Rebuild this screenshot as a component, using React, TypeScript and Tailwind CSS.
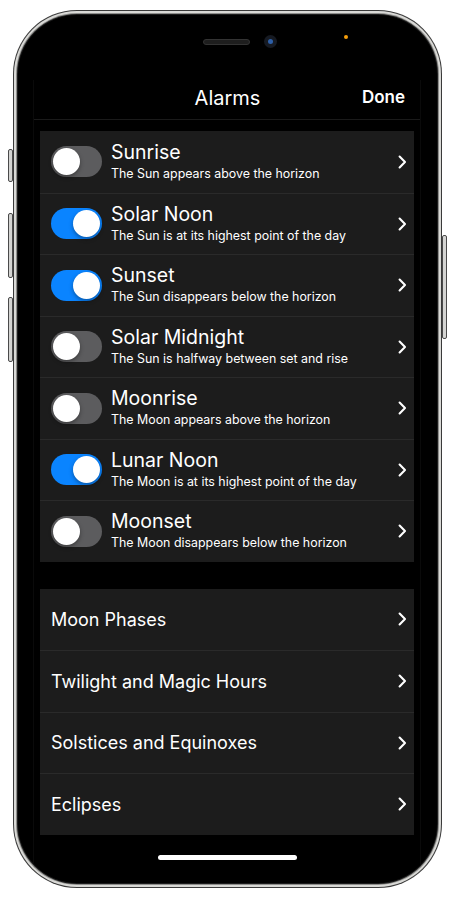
type Alarm = { title: string; sub: string; on: boolean }

const alarms: Alarm[] = [
    { title: "Sunrise", sub: "The Sun appears above the horizon", on: false },
    { title: "Solar Noon", sub: "The Sun is at its highest point of the day", on: true },
    { title: "Sunset", sub: "The Sun disappears below the horizon", on: true },
    { title: "Solar Midnight", sub: "The Sun is halfway between set and rise", on: false },
    { title: "Moonrise", sub: "The Moon appears above the horizon", on: false },
    { title: "Lunar Noon", sub: "The Moon is at its highest point of the day", on: true },
    { title: "Moonset", sub: "The Moon disappears below the horizon", on: false },
]

const events = ["Moon Phases", "Twilight and Magic Hours", "Solstices and Equinoxes", "Eclipses"]

function Toggle({ on }: { on: boolean }) {
    return (
        <div className={`w-[51px] h-[31px] rounded-full p-[2px] flex shrink-0 ${on ? "bg-[#0a84ff] justify-end" : "bg-[#5c5c5e] justify-start"}`}>
            <div className="w-[27px] h-[27px] rounded-full bg-white shadow-[0_2px_4px_rgba(0,0,0,0.35)]" />
        </div>
    )
}

function Chevron() {
    return (
        <svg className="w-[9px] h-[14px] shrink-0" viewBox="0 0 9 14" fill="none">
            <path d="M1.6 1.6 L7 7 L1.6 12.4" stroke="white" strokeWidth={2.1} strokeLinecap="round" strokeLinejoin="round" />
        </svg>
    )
}

function SideButton({ className }: { className: string }) {
    return <div className={`absolute w-[5px] rounded-[2px] bg-[#d4d4d2] border border-[#4a4a4a] ${className}`} />
}

export default function App() {
    return (
        <div className="w-[455px] h-[900px] bg-white pt-[10px] pl-[13px] relative" style={{ fontFamily: "Inter, 'Noto Sans', sans-serif" }}>
            {/* hardware buttons */}
            <SideButton className="left-[8px] top-[149px] h-[33px]" />
            <SideButton className="left-[8px] top-[213px] h-[65px]" />
            <SideButton className="left-[8px] top-[297px] h-[65px]" />
            <SideButton className="left-[442px] top-[235px] h-[104px]" />

            {/* phone frame */}
            <div className="w-[429px] h-[878px] rounded-[64px] bg-[#3a3a3a] p-[1px] relative">
                <div className="w-full h-full rounded-[63px] bg-[#d9d9d6] p-[2px]">
                    <div className="w-full h-full rounded-[61px] bg-[#8e8e8c] p-[1px]">
                        <div className="w-full h-full rounded-[60px] bg-[#1c1c1c] p-[1px]">
                            <div className="w-full h-full rounded-[59px] bg-black relative flex flex-col overflow-hidden">
                                {/* sensor area */}
                                <div className="h-[65px] relative shrink-0">
                                    <div className="absolute left-[185px] top-[24px] w-[47px] h-[6px] rounded-full bg-[#1e1e1e] border border-[#333]" />
                                    <div className="absolute left-[246px] top-[20px] w-[13px] h-[13px] rounded-full bg-[#161a22] flex items-center justify-center">
                                        <div className="w-[5px] h-[5px] rounded-full bg-[#2d5fa8]" />
                                    </div>
                                    <div className="absolute left-[326px] top-[20px] w-[4px] h-[4px] rounded-full bg-[#f59e0b]" />
                                </div>

                                {/* app view */}
                                <div className="ml-[15px] w-[388px] flex-1 flex flex-col border-x border-[#0a0a0a] mb-[12px]">
                                    <div className="h-[40px] shrink-0 relative flex items-center justify-center border-b border-[#1a1a1a]">
                                        <span className="text-white text-[20px] ml-[1px] -mt-[3px]">Alarms</span>
                                        <span className="absolute right-[15px] text-white text-[17px] font-semibold -mt-[3px]">Done</span>
                                    </div>

                                    <div className="mx-[6px] mt-[11px] bg-[#1c1c1c] flex flex-col">
                                        {alarms.map((a, i) => (
                                            <div key={a.title} className={`h-[61.5px] flex items-center pl-[11px] pr-[7px] ${i > 0 ? "border-t border-[#2a2a2a]" : ""}`}>
                                                <Toggle on={a.on} />
                                                <div className="flex-1 ml-[9px] flex flex-col text-white -mt-[1px]">
                                                    <span className="text-[19.5px] leading-[24px]">{a.title}</span>
                                                    <span className="text-[12.4px] leading-[18px] mt-[1px]">{a.sub}</span>
                                                </div>
                                                <Chevron />
                                            </div>
                                        ))}
                                    </div>

                                    <div className="mx-[6px] mt-[27px] bg-[#1c1c1c] flex flex-col">
                                        {events.map((e, i) => (
                                            <div key={e} className={`h-[61.5px] flex items-center pl-[11px] pr-[7px] ${i > 0 ? "border-t border-[#2a2a2a]" : ""}`}>
                                                <span className="flex-1 text-white text-[18px]">{e}</span>
                                                <Chevron />
                                            </div>
                                        ))}
                                    </div>
                                </div>

                                {/* home indicator */}
                                <div className="absolute left-[140px] top-[840px] w-[139px] h-[5px] rounded-full bg-white" />
                            </div>
                        </div>
                    </div>
                </div>
            </div>
        </div>
    )
}
